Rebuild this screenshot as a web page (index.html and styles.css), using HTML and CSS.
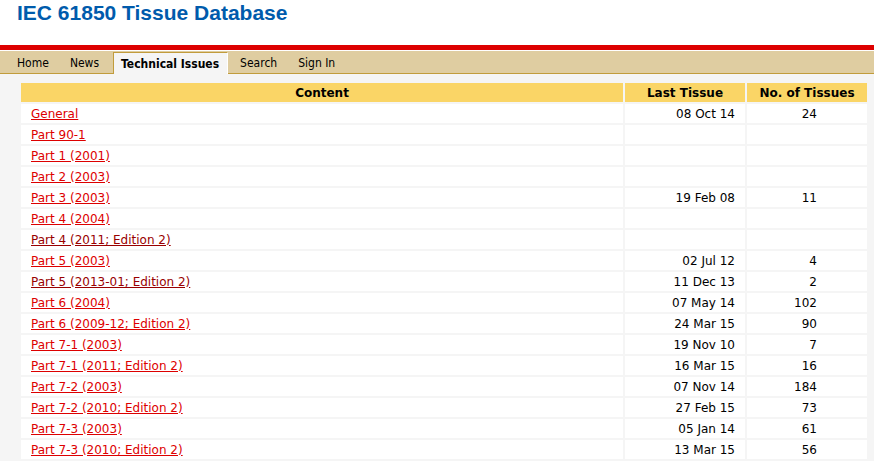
FILE: index.html
```html
<!DOCTYPE html>
<html lang="en">
  <head>
    <meta charset="UTF-8" />
    <meta name="viewport" content="width=device-width, initial-scale=1.0" />

    <title>IEC 61850 Tissue Database</title>
    <link rel="stylesheet" href="styles.css">
  </head>
  <body>
    <header class="header">
      <h1 class="title">IEC 61850 Tissue Database</h1>
    </header>

    <nav class="nav">
      <a href="#home" class="nav-link">Home</a>
      <a href="#news" class="nav-link">News</a>
      <a href="#issues" class="nav-link active">Technical Issues</a>
      <a href="#search" class="nav-link">Search</a>
      <a href="#signin" class="nav-link">Sign In</a>
    </nav>

    <main class="content">
      <table class="tissues">
        <thead>
          <tr>
            <th>Content</th>
            <th class="date">Last Tissue</th>
            <th class="count">No. of Tissues</th>
          </tr>
        </thead>
        <tbody>
          <tr><td><a href="#general">General</a></td><td class="date">08 Oct 14</td><td class="count">24</td></tr>
          <tr><td><a href="#p90-1">Part 90-1</a></td><td class="date"></td><td class="count"></td></tr>
          <tr><td><a href="#p1">Part 1 (2001)</a></td><td class="date"></td><td class="count"></td></tr>
          <tr><td><a href="#p2">Part 2 (2003)</a></td><td class="date"></td><td class="count"></td></tr>
          <tr><td><a href="#p3">Part 3 (2003)</a></td><td class="date">19 Feb 08</td><td class="count">11</td></tr>
          <tr><td><a href="#p4">Part 4 (2004)</a></td><td class="date"></td><td class="count"></td></tr>
          <tr><td><a href="#p4-ed2" class="seen">Part 4 (2011; Edition 2)</a></td><td class="date"></td><td class="count"></td></tr>
          <tr><td><a href="#p5">Part 5 (2003)</a></td><td class="date">02 Jul 12</td><td class="count">4</td></tr>
          <tr><td><a href="#p5-ed2" class="seen">Part 5 (2013-01; Edition 2)</a></td><td class="date">11 Dec 13</td><td class="count">2</td></tr>
          <tr><td><a href="#p6">Part 6 (2004)</a></td><td class="date">07 May 14</td><td class="count">102</td></tr>
          <tr><td><a href="#p6-ed2">Part 6 (2009-12; Edition 2)</a></td><td class="date">24 Mar 15</td><td class="count">90</td></tr>
          <tr><td><a href="#p7-1">Part 7-1 (2003)</a></td><td class="date">19 Nov 10</td><td class="count">7</td></tr>
          <tr><td><a href="#p7-1-ed2">Part 7-1 (2011; Edition 2)</a></td><td class="date">16 Mar 15</td><td class="count">16</td></tr>
          <tr><td><a href="#p7-2">Part 7-2 (2003)</a></td><td class="date">07 Nov 14</td><td class="count">184</td></tr>
          <tr><td><a href="#p7-2-ed2">Part 7-2 (2010; Edition 2)</a></td><td class="date">27 Feb 15</td><td class="count">73</td></tr>
          <tr><td><a href="#p7-3">Part 7-3 (2003)</a></td><td class="date">05 Jan 14</td><td class="count">61</td></tr>
          <tr><td><a href="#p7-3-ed2">Part 7-3 (2010; Edition 2)</a></td><td class="date">13 Mar 15</td><td class="count">56</td></tr>
        </tbody>
      </table>
    </main>
  </body>
</html>
```

FILE: styles.css
```css
body {
  margin: 0;
  background-color: #f5f5f5;
  color: #000;
  font-family: "DejaVu Sans", Verdana, sans-serif;
  font-size: 12px;
}
.header {
  background-color: #fff;
  border-bottom: 5px solid #dd0000;
  padding: 0 17px 19px;
}
.title {
  margin: 0;
  color: #005bac;
  font-family: "Liberation Sans", Arial, sans-serif;
  font-size: 21px;
  line-height: 26px;
}
.nav {
  display: flex;
  align-items: flex-end;
  padding-left: 9px;
  border-top: 1px solid #fff;
  border-bottom: 1px solid #c19c3c;
  background-color: #dfcda1;
  font-family: "DejaVu Sans Condensed", Tahoma, sans-serif;
}
.nav-link {
  padding: 2px 13px 0 8px;
  color: #000;
  line-height: 20px;
  text-decoration: none;
}
.nav-link.active {
  margin: 0 4px -1px 1px;
  padding: 1px 8px 0 7px;
  border-top: 1px solid #c19c3c;
  border-left: 1px solid #c19c3c;
  border-right: 1px solid #fff;
  background-color: #f5f5f5;
  font-weight: bold;
}
.content {
  padding: 7px 5px 0 19px;
}
.tissues {
  width: 100%;
  border-spacing: 2px;
  table-layout: fixed;
}
.tissues th,
.tissues td {
  box-sizing: border-box;
  height: 19px;
  padding: 2px 10px 0;
  background-color: #fff;
  line-height: 17px;
}
.tissues th {
  padding: 2px 0 0;
  background-color: #fad566;
}
.tissues .date,
.tissues .count {
  width: 120px;
}
.tissues td.date,
.tissues td.count {
  text-align: right;
}
.tissues td.count {
  padding-right: 50px;
}
.tissues a {
  color: #dd0000;
}
.tissues a.seen {
  color: #990000;
}
```
